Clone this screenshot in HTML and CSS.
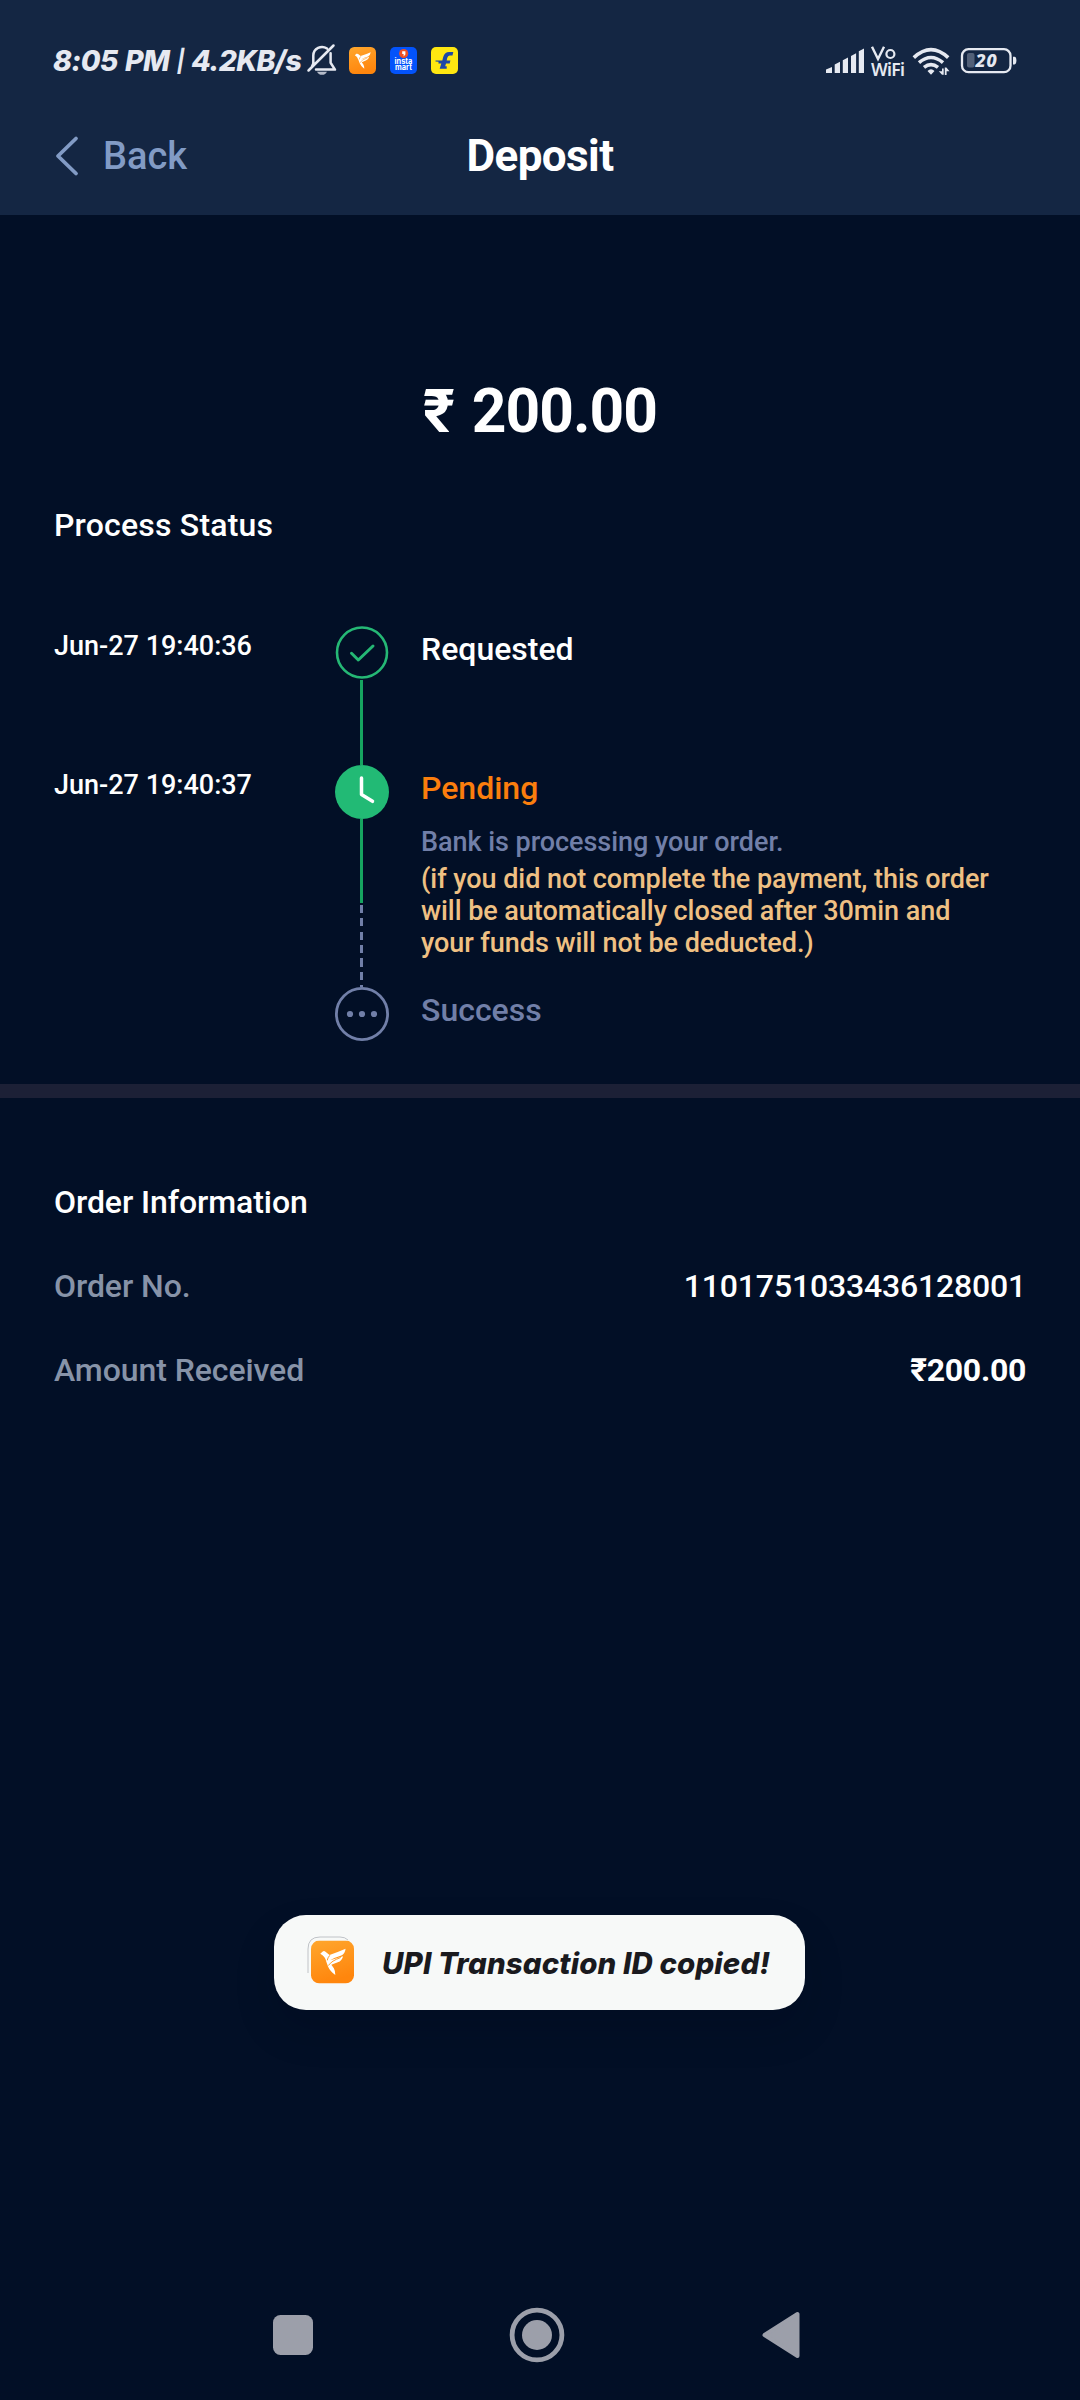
FILE: index.html
```html
<!DOCTYPE html>
<html lang="en">
<head>
<meta charset="utf-8">
<title>Deposit</title>
<link rel="stylesheet" href="styles.css">
</head>
<body>
<svg class="defs" width="0" height="0" aria-hidden="true">
  <defs>
    <linearGradient id="orange" x1="0" y1="0" x2="0.3" y2="1"><stop offset="0" stop-color="#ffa72e"/><stop offset="1" stop-color="#ff860d"/></linearGradient>
    <symbol id="bird" viewBox="0 0 44 44">
      <rect width="44" height="44" rx="8.5" fill="url(#orange)"/>
      <path fill="#fff" d="M9.5 13.5 12 11.2Q13.3 10.4 14.8 11.4L19 14.8Q26 12.4 35.4 8.4Q34.8 13.4 31 15.4Q25 17.2 19.6 20.2Q26 18.2 32.8 16Q31.8 20.8 27.4 22.2L20.8 24.7 23.4 28.4Q25 31.4 24.9 35.4Q19.4 31.4 17.4 26.6L15.6 21.4Q14.6 16.2 9.5 13.5Z"/>
      <path fill="none" stroke="#ff9a20" stroke-width="1" d="M19.2 15.2Q17 17.6 16.6 20.4M17.8 25.6Q21 20.8 30.4 17.4"/>
    </symbol>
  </defs>
</svg>
<header class="top">
  <div class="status">
    <span class="clock">8:05 PM <small>|</small> 4.2KB/s</span>
    <svg class="bell" width="30" height="32" viewBox="0 0 30 32" fill="none" stroke="#e6e9f1" stroke-width="2.5">
      <path d="M5 22.5 6.3 19.5V11.5A8.7 8.7 0 0 1 20 4.6M23.6 9.3V18.8L28 25.6H9M26.5 1.5 1.5 26.5" stroke-linecap="round" stroke-linejoin="round"/>
      <path d="M10 27.7H20Q18.6 30.8 15 30.8T10 27.7Z" fill="#b4bac8" stroke="none"/>
    </svg>
    <svg class="app" width="27" height="27"><use href="#bird"/></svg>
    <svg class="app" width="27" height="27" viewBox="0 0 27 27">
      <rect width="27" height="27" rx="5" fill="#0353fb"/><circle cx="13.7" cy="6.6" r="4.6" fill="#ee5125"/>
      <path d="M12.2 4.2h3.2v3.2l-1.8 2v-2.3h-1.4z" fill="#fff"/>
      <text class="insta" x="13.5" y="17.3">insta</text><text class="insta" x="13.5" y="23.2">mart</text>
    </svg>
    <svg class="app" width="27" height="27" viewBox="0 0 27 27">
      <rect width="27" height="27" rx="5" fill="#ffe711"/>
      <path fill="#1d47a6" d="M4.5 13.6H11.3L12.3 9.8Q13.6 5.2 18.2 5H22.3L21.5 8.4H18.7Q16.8 8.5 16.2 11L15.7 13.4H19.4L18.7 16.4H15L14.2 19.3H15.7V21.8H8.7L10.3 16.5H7.4L7.6 14.8 4.5 14.4Z"/>
    </svg>
    <span class="spacer"></span>
    <svg class="system" width="200" height="40" viewBox="820 40 200 40" fill="#e6e9f1">
      <path d="M826 69.5 832 67V73H826ZM834.7 64.5 840 61.8V73H834.7ZM842.8 60.3 848 57.6V73H842.8ZM851 56 856.1 53.3V73H851ZM858.8 51.3 864 48.6V73H858.8Z"/>
      <path d="M872 46.7 878 59 884 46.7" fill="none" stroke="#e6e9f1" stroke-width="2.4"/>
      <circle cx="890.4" cy="54" r="4" fill="none" stroke="#e6e9f1" stroke-width="2.2"/>
      <text class="wifi-label" x="871" y="75.5" textLength="34">WiFi</text>
      <g fill="none" stroke="#e6e9f1" stroke-width="3.6">
        <path d="M913.8 57.6Q931 41.6 948.2 57.6"/><path d="M919 62.6Q931 52.4 943 62.6"/><path d="M924 67.3Q931 61.8 938 67.3"/>
      </g>
      <path d="M927.5 71Q931 67.5 934.5 71L931 74.7ZM942 68.5H943.7V74.8H942L938.8 71.3H942ZM944.8 67.5H946.4L949.5 71.2H946.6V75H944.8Z"/>
      <rect x="962" y="49.2" width="48.5" height="23" rx="6.5" fill="none" stroke="#e6e9f1" stroke-width="2.3"/>
      <rect x="967" y="53" width="7.5" height="14.5" rx="2" fill="#526078"/>
      <path d="M1013 56.8H1014.5Q1016.4 57 1016.4 60.6T1014.5 64.6H1013Z"/>
      <text class="level" x="975.6" y="67.2" textLength="21">20</text>
    </svg>
  </div>
  <nav class="bar">
    <a class="back"><svg width="26" height="42" viewBox="0 0 26 42" fill="none" stroke="#829bc5" stroke-width="3.8" stroke-linecap="round" stroke-linejoin="round"><path d="M22 3.5 4 21 22 38.5"/></svg><span>Back</span></a>
    <h1>Deposit</h1>
  </nav>
</header>
<main>
  <div class="amount">₹ 200.00</div>
  <section class="process">
    <h2>Process Status</h2>
    <div class="step first">
      <time>Jun-27 19:40:36</time>
      <div class="track">
        <svg width="54" height="54" viewBox="0 0 54 54" fill="none" stroke="#25b875" stroke-width="2.6"><circle cx="27" cy="26.5" r="25"/><path stroke-width="3" stroke-linecap="round" stroke-linejoin="round" d="M16.5 27.3 23.3 34 38 20"/></svg>
        <i class="line"></i>
      </div>
      <div class="info"><h3>Requested</h3></div>
    </div>
    <div class="step second">
      <time>Jun-27 19:40:37</time>
      <div class="track">
        <svg width="54" height="54" viewBox="0 0 54 54"><circle cx="27" cy="27" r="27" fill="#22ba75"/><path d="M26.5 13V29.5L37.5 36.3" fill="none" stroke="#fff" stroke-width="3.5" stroke-linecap="round" stroke-linejoin="round"/></svg>
        <i class="line"></i><i class="line dashed"></i>
      </div>
      <div class="info"><h3 class="pending">Pending</h3><p class="muted">Bank is processing your order.</p><p class="note">(if you did not complete the payment, this order<br>will be automatically closed after 30min and<br>your funds will not be deducted.)</p></div>
    </div>
    <div class="step third">
      <time></time>
      <div class="track">
        <svg width="54" height="54" viewBox="0 0 54 54"><circle cx="27" cy="27" r="25.6" fill="none" stroke="#717fa8" stroke-width="2.8"/><g fill="#717fa8"><circle cx="15" cy="27" r="3.1"/><circle cx="27" cy="27" r="3.1"/><circle cx="39" cy="27" r="3.1"/></g></svg>
      </div>
      <div class="info"><h3 class="muted">Success</h3></div>
    </div>
  </section>
  <section class="order">
    <h2>Order Information</h2>
    <div class="row"><span class="label">Order No.</span><span class="number">1101751033436128001</span></div>
    <div class="row"><span class="label">Amount Received</span><b class="received">₹200.00</b></div>
  </section>
</main>
<div class="toast">
  <svg class="toast-icon" width="48" height="48" viewBox="0 0 48 48"><path d="M1 37V13Q1 1 13 1H33Q38 1 41 4" fill="none" stroke="#b9bcc2" stroke-width=".9"/><use href="#bird" x="4" y="4.5" width="43" height="43"/></svg>
  <span class="toast-text">UPI Transaction ID copied!</span>
</div>
<footer class="navkeys">
  <svg width="40" height="40"><rect width="40" height="40" rx="7.5" fill="#9c9faa"/></svg>
  <svg class="home" width="56" height="56" viewBox="0 0 56 56"><circle cx="28" cy="28" r="24.9" fill="none" stroke="#9c9faa" stroke-width="4.8"/><circle cx="28" cy="28" r="15" fill="#9c9faa"/></svg>
  <svg width="38" height="48" viewBox="0 0 38 48"><path d="M2.5 24 35.5 3V45Z" fill="#9c9faa" stroke="#9c9faa" stroke-width="4" stroke-linejoin="round"/></svg>
</footer>
</body>
</html>
```
FILE: styles.css
```css
* { box-sizing: border-box; margin: 0; padding: 0; }
body {
  width: 1080px; height: 2400px; display: flex; flex-direction: column;
  position: relative; overflow: hidden; background: #020f26; color: #fff;
  font: 500 32px/40px Roboto, "Noto Sans", sans-serif;
}
svg { display: block; flex: none; overflow: visible; }
.defs { position: absolute; }
h1, h2, h3 { font-weight: 500; font-size: 32px; line-height: 40px; white-space: nowrap; }
.top { height: 215px; background: #142643; }
.status { display: flex; align-items: center; height: 120px; padding: 0 60px 0 53px; }
.clock { width: 254px; padding-top: 3px; font: italic 800 28.5px/40px Inter, sans-serif; letter-spacing: -.65px; word-spacing: 1.7px; color: #e6e9f1; white-space: nowrap; }
.clock small { font-size: 22px; font-weight: 700; position: relative; top: -2px; }
.bell { margin-right: 12px; }
.app { margin-right: 14px; }
.spacer { flex: 1; }
.insta { font: 700 7.4px Inter, sans-serif; fill: #fff; text-anchor: middle; }
.wifi-label { font: 600 17.5px "Noto Sans", sans-serif; }
.level { font: italic 800 18px "Noto Sans", sans-serif; }
.bar { display: grid; grid-template-columns: 1fr auto 1fr; align-items: center; height: 71px; padding: 0 54px; }
.back { display: flex; align-items: center; gap: 23px; color: #829bc5; font-size: 38px; }
h1 { font-size: 44px; font-weight: 700; letter-spacing: -0.6px; }
main { display: flex; flex-direction: column; padding-top: 162px; }
.amount { text-align: center; font-size: 60.5px; line-height: 70px; font-weight: 700; letter-spacing: -1px; word-spacing: 4px; }
.process { display: flex; flex-direction: column; padding: 58px 54px 43px; border-bottom: 14px solid #1c2036; }
.process h2 { margin-bottom: 81px; letter-spacing: .2px; }
.step { display: grid; grid-template-columns: 281px 54px 1fr; }
.first { height: 139px; }
.second { height: 222px; }
.third { height: 54px; }
.step time { padding-top: 3px; font-size: 27px; line-height: 34px; }
.track { display: flex; flex-direction: column; align-items: center; }
.line { flex: 1; width: 3px; margin-right: 1px; background: #16a460; }
.dashed { background: repeating-linear-gradient(transparent 0 1.5px, #717fa8 1.5px 9.5px, transparent 9.5px 13.5px); }
.info { padding: 3px 0 0 32px; }
.info p { font-size: 27px; line-height: 32px; letter-spacing: -.05px; white-space: nowrap; }
.pending { color: #fb7e0d; }
.muted { color: #717fa8; }
p.muted { margin: 18px 0 5px; }
.note { color: #efc083; }
.order { display: flex; flex-direction: column; gap: 44px; padding: 84px 54px; }
.row { display: flex; justify-content: space-between; }
.label, .order h2 { letter-spacing: -.08px; }
.label { color: #8793a8; }
.number { letter-spacing: -.18px; }
.received { font-weight: 700; letter-spacing: -.3px; }
.toast {
  position: absolute; left: 274px; top: 1915px; width: 531px; height: 95px;
  display: flex; align-items: center; gap: 27px; padding-left: 33px;
  border-radius: 32px; background: #f7f9f8; color: #1a1a1e;
  box-shadow: 0 20px 40px rgba(0, 10, 20, .15);
}
.toast-icon { margin-bottom: 5px; }
.toast-text { padding-top: 1px; font: italic 800 29.5px/40px Inter, sans-serif; letter-spacing: .1px; white-space: nowrap; }
.navkeys { display: flex; align-items: center; justify-content: space-between; margin-top: auto; height: 130px; padding: 0 280px 0 273px; }
.home { margin-right: 1.5px; }
```
